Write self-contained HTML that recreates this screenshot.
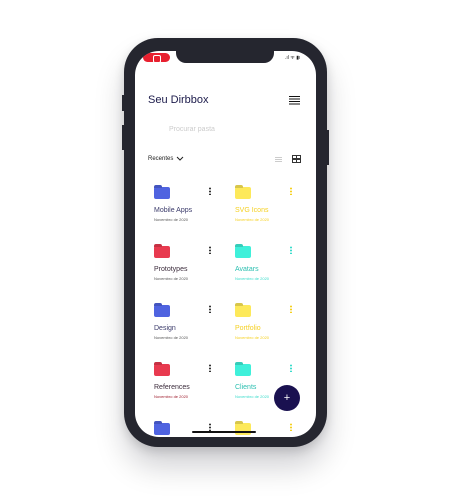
<!DOCTYPE html>
<html><head><meta charset="utf-8"><style>
*{margin:0;padding:0;box-sizing:border-box}
body{width:450px;height:500px;background:#fff;position:relative;overflow:hidden;font-family:"Liberation Sans",sans-serif}
.frame{position:absolute;left:124px;top:38px;width:203px;height:409px;border-radius:34px;background:#25262f;box-shadow:0 20px 30px rgba(0,0,20,0.18),0 4px 10px rgba(0,0,0,0.15)}
.screen{position:absolute;left:135px;top:51px;width:181px;height:386px;border-radius:24px;background:#fff;overflow:hidden}
.notch{position:absolute;left:41px;top:-2px;width:98px;height:14px;background:#25262f;border-radius:0 0 10px 10px}
.rec{position:absolute;left:8px;top:2px;width:27px;height:9px;border-radius:5px;background:#e8202f}
.rec:after{content:"";position:absolute;left:10px;top:1.5px;width:6px;height:6px;border:1px solid #fff;border-radius:2px}
.abs{position:absolute}
.t{position:absolute;white-space:nowrap}
.folder{position:absolute;width:16px;height:12px;border-radius:2px}
.folder:before{content:"";position:absolute;left:0;top:-2px;width:8px;height:3px;border-radius:2px 2px 0 0;background:inherit;filter:brightness(.85)}
.dots{position:absolute;width:2px;height:8px;background:radial-gradient(circle,currentColor 0.9px,transparent 1.1px) 0 0/2px 3px}
.name{position:absolute;font-size:7px}
.date{position:absolute;font-size:4px}
</style></head><body>
<div class="frame"></div>
<div class="abs" style="left:122px;top:95px;width:2px;height:16px;background:#25262f"></div>
<div class="abs" style="left:122px;top:125px;width:2px;height:25px;background:#25262f"></div>
<div class="abs" style="left:327px;top:130px;width:2px;height:35px;background:#25262f"></div>
<div class="screen">
<div class="notch"></div>
<div class="rec"></div>
<div class="t" style="left:150px;top:4px;font-size:5px;color:#222">.ıl ᯤ ▮ı</div>
<div class="t" style="left:13px;top:43px;font-size:11px;color:#1b1a4a">Seu Dirbbox</div>
<div class="abs" style="left:154px;top:45px;width:11px;height:1.2px;background:#111;box-shadow:0 2.5px 0 #111,0 5px 0 #111,0 7.5px 0 #111"></div>
<div class="t" style="left:34px;top:75px;font-size:7px;color:#ccc">Procurar pasta</div>
<div class="t" style="left:13px;top:105px;font-size:6px;color:#222">Recentes</div>
<svg class="abs" style="left:41px;top:105px" width="8" height="6"><path d="M1 1L4 4L7 1" stroke="#222" fill="none" stroke-width="1"/></svg>
<div class="abs" style="left:140px;top:106px;width:7px;height:1px;background:#ccc;box-shadow:0 2px 0 #ccc,0 4px 0 #ccc"></div>
<svg class="abs" style="left:157px;top:104px" width="9" height="8"><rect x=".5" y=".5" width="8" height="3" fill="none" stroke="#333"/><rect x=".5" y="4.5" width="8" height="3" fill="none" stroke="#333"/><line x1="4.5" y1="0" x2="4.5" y2="8" stroke="#333"/></svg>

<div class="folder" style="left:19px;top:136px;background:#4f63e0"></div>
<div class="dots" style="left:74px;top:136px;color:#333"></div>
<div class="name" style="left:19px;top:156px;color:#3b3b6b">Mobile Apps</div>
<div class="date" style="left:19px;top:166px;color:#555">Novembro de 2020</div>
<div class="folder" style="left:100px;top:136px;background:#fde95a"></div>
<div class="dots" style="left:155px;top:136px;color:#f5d020"></div>
<div class="name" style="left:100px;top:156px;color:#f5d020">SVG Icons</div>
<div class="date" style="left:100px;top:166px;color:#f5d020">Novembro de 2020</div>

<div class="folder" style="left:19px;top:195px;background:#e83a4f"></div>
<div class="dots" style="left:74px;top:195px;color:#333"></div>
<div class="name" style="left:19px;top:215px;color:#3b2b3b">Prototypes</div>
<div class="date" style="left:19px;top:225px;color:#555">Novembro de 2020</div>
<div class="folder" style="left:100px;top:195px;background:#3ff0da"></div>
<div class="dots" style="left:155px;top:195px;color:#3adccb"></div>
<div class="name" style="left:100px;top:215px;color:#2bbfb0">Avatars</div>
<div class="date" style="left:100px;top:225px;color:#3adccb">Novembro de 2020</div>

<div class="folder" style="left:19px;top:254px;background:#4f63e0"></div>
<div class="dots" style="left:74px;top:254px;color:#333"></div>
<div class="name" style="left:19px;top:274px;color:#3b3b6b">Design</div>
<div class="date" style="left:19px;top:284px;color:#555">Novembro de 2020</div>
<div class="folder" style="left:100px;top:254px;background:#fde95a"></div>
<div class="dots" style="left:155px;top:254px;color:#f5d020"></div>
<div class="name" style="left:100px;top:274px;color:#f5d020">Portfolio</div>
<div class="date" style="left:100px;top:284px;color:#f5d020">Novembro de 2020</div>

<div class="folder" style="left:19px;top:313px;background:#e83a4f"></div>
<div class="dots" style="left:74px;top:313px;color:#333"></div>
<div class="name" style="left:19px;top:333px;color:#3b2b3b">References</div>
<div class="date" style="left:19px;top:343px;color:#a02030">Novembro de 2020</div>
<div class="folder" style="left:100px;top:313px;background:#3ff0da"></div>
<div class="dots" style="left:155px;top:313px;color:#3adccb"></div>
<div class="name" style="left:100px;top:333px;color:#2bbfb0">Clients</div>
<div class="date" style="left:100px;top:343px;color:#3adccb">Novembro de 2020</div>

<div class="folder" style="left:19px;top:372px;background:#4f63e0"></div>
<div class="dots" style="left:74px;top:372px;color:#333"></div>
<div class="folder" style="left:100px;top:372px;background:#fde95a"></div>
<div class="dots" style="left:155px;top:372px;color:#f5d020"></div>

<div class="abs" style="left:139px;top:334px;width:26px;height:26px;border-radius:50%;background:#1a1150;color:#fff;font-size:11px;text-align:center;line-height:26px">+</div>
<div class="abs" style="left:57px;top:380px;width:64px;height:2px;border-radius:1px;background:#111"></div>
</div>
</body></html>
